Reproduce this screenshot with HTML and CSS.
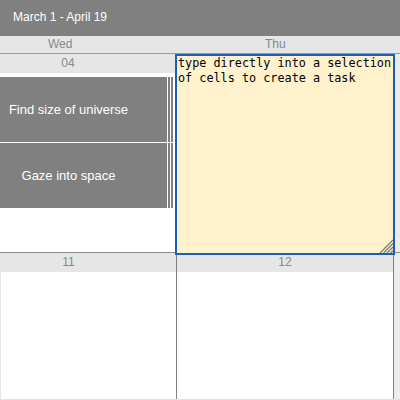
FILE: index.html
```html
<!DOCTYPE html>
<html>
<head>
<meta charset="utf-8">
<link rel="stylesheet" href="styles.css">
</head>
<body>
<div class="app">
  <div class="toolbar">March 1 - April 19</div>
  <div class="days">
    <div class="day day-wed">Wed</div>
    <div class="day day-thu">Thu</div>
  </div>
  <div class="weeks">
    <div class="week week-first">
      <div class="cell cell-left">
        <div class="date date-left">04</div>
        <div class="events">
          <div class="event">
            <div class="event-main">Find size of universe</div>
            <div class="event-bar"></div>
            <div class="event-bar"></div>
          </div>
          <div class="event">
            <div class="event-main">Gaze into space</div>
            <div class="event-bar"></div>
            <div class="event-bar"></div>
          </div>
        </div>
      </div>
      <div class="cell cell-right">
        <div class="date">05</div>
      </div>
    </div>
    <div class="week week-second">
      <div class="cell cell-left">
        <div class="date date-left">11</div>
      </div>
      <div class="cell cell-right">
        <div class="date">12</div>
      </div>
    </div>
    <textarea class="editor" spellcheck="false">type directly into a selection of cells to create a task</textarea>
    <svg class="grip" width="14" height="14" viewBox="0 0 14 14">
      <path d="M14 1 L1 14 M14 4.5 L4.5 14 M14 8 L8 14 M14 11.5 L11.5 14" stroke="#7d7d7d" stroke-width="1.3" fill="none"/>
    </svg>
  </div>
</div>
</body>
</html>
```
FILE: styles.css
```css
* { box-sizing: border-box; }
html, body { margin: 0; padding: 0; }
body {
  width: 400px;
  height: 400px;
  overflow: hidden;
  font-family: "Liberation Sans", Arial, sans-serif;
  background: #fff;
}
.app {
  width: 400px;
  height: 400px;
  display: flex;
  flex-direction: column;
}
.toolbar {
  height: 36px;
  line-height: 34px;
  background: #808080;
  color: #fff;
  font-size: 12px;
  padding-left: 13px;
  flex: none;
}
.days {
  height: 18px;
  background: #e6e6e6;
  border-bottom: 1px solid #9a9a9a;
  display: grid;
  grid-template-columns: 177px 1fr;
  flex: none;
}
.day {
  font-size: 12px;
  line-height: 17px;
  color: #888;
}
.day-wed { padding-left: 48px; }
.day-thu { padding-left: 88px; }
.weeks {
  position: relative;
  flex: 1;
  display: flex;
  flex-direction: column;
  background: #ececec;
}
.week {
  display: grid;
  grid-template-columns: 177px 217px;
}
.week-first {
  height: 199px;
  border-bottom: 1px solid #8a8a8a;
  flex: none;
}
.week-second {
  flex: 1;
  border-bottom: 1px solid #e3e3e3;
}
.cell {
  background: #fff;
  display: flex;
  flex-direction: column;
}
.cell-left {
  border-left: 1px solid #e6e6e6;
  border-right: 1px solid #808080;
}
.cell-right {
  border-right: 1px solid #808080;
}
.week-first .cell-left { border-left: none; border-right-color: #fff; }
.date {
  height: 19px;
  line-height: 19px;
  background: #e6e6e6;
  color: #888;
  font-size: 12px;
  text-align: center;
  flex: none;
}
.date-left { padding-right: 40px; }
.events {
  margin-top: 4px;
  display: flex;
  flex-direction: column;
  gap: 1px;
}
.event {
  height: 65px;
  display: flex;
}
.event-main {
  width: 167px;
  background: #808080;
  color: #fff;
  font-size: 13px;
  display: flex;
  align-items: center;
  justify-content: center;
  padding-right: 30px;
}
.event-bar {
  width: 2px;
  margin-left: 1px;
  background: #808080;
}
.editor {
  position: absolute;
  left: 175px;
  top: 0;
  width: 220px;
  height: 201px;
  margin: 0;
  border: 2px solid #1a5fb7;
  background: #fff2cc;
  font-family: "DejaVu Sans Mono", "Liberation Mono", monospace;
  font-size: 11.8px;
  line-height: 15px;
  color: #000;
  padding: 0 0 0 1px;
  outline: none;
  overflow: hidden;
  resize: none;
}
.grip {
  position: absolute;
  left: 379px;
  top: 185px;
}
```
